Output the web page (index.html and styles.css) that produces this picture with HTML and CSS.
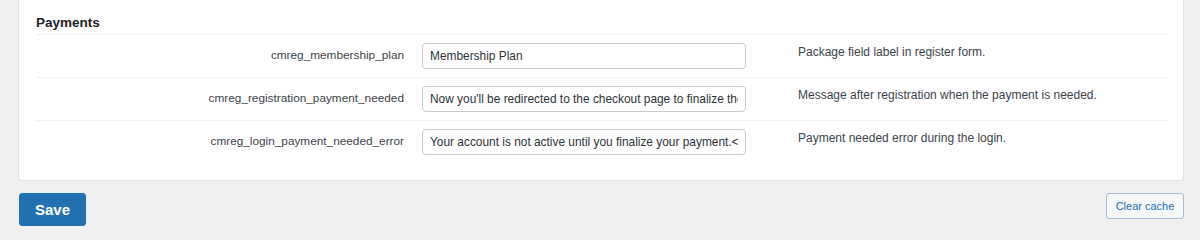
FILE: index.html
```html
<!DOCTYPE html>
<html lang="en">
<head>
<meta charset="utf-8">
<title>Payments settings</title>
<link rel="stylesheet" href="styles.css">
</head>
<body>
<div class="wrap">
  <div class="card">
    <h2 class="section-title">Payments</h2>
    <div class="rows">
      <div class="row">
        <label class="label" for="f1">cmreg_membership_plan</label>
        <div class="field"><input id="f1" class="text" type="text" value="Membership Plan"></div>
        <div class="desc">Package field label in register form.</div>
      </div>
      <div class="row">
        <label class="label" for="f2">cmreg_registration_payment_needed</label>
        <div class="field"><input id="f2" class="text" type="text" value="Now you'll be redirected to the checkout page to finalize the registration."></div>
        <div class="desc">Message after registration when the payment is needed.</div>
      </div>
      <div class="row">
        <label class="label" for="f3">cmreg_login_payment_needed_error</label>
        <div class="field"><input id="f3" class="text" type="text" value="Your account is not active until you finalize your payment.<a href=&quot;%s&quot;>"></div>
        <div class="desc">Payment needed error during the login.</div>
      </div>
    </div>
  </div>
  <div class="actions">
    <button class="btn-primary" type="button">Save</button>
    <button class="btn-secondary" type="button">Clear cache</button>
  </div>
</div>
</body>
</html>
```
FILE: styles.css
```css
html, body {
  margin: 0;
  padding: 0;
}
body {
  background: #f0f0f1;
  font-family: "Liberation Sans", Arial, sans-serif;
  color: #3c434a;
}
.wrap {
  padding: 0 16px 0 18px;
}
.card {
  background: #fff;
  border: 1px solid #e2e2e4;
  border-top: 0;
  border-radius: 0 0 4px 4px;
  padding: 0 16px 17px 17px;
}
.section-title {
  margin: 0;
  padding-top: 13px;
  padding-bottom: 1px;
  line-height: 20px;
  font-size: 13.5px;
  font-weight: bold;
  color: #1d2327;
  border-bottom: 1px solid #f0f0f1;
}
.row {
  display: grid;
  grid-template-columns: 368px 342px 1fr;
  height: 42px;
  border-bottom: 1px solid #f0f0f1;
}
.row:last-child {
  border-bottom: 0;
}
.label {
  align-self: start;
  padding-top: 11px;
  text-align: right;
  font-size: 11.8px;
  line-height: 18px;
  color: #3c434a;
  white-space: nowrap;
}
.field {
  padding: 8px 0 0 18px;
}
.text {
  box-sizing: border-box;
  display: block;
  width: 324px;
  height: 26px;
  margin: 0;
  padding: 0 7px;
  border: 1px solid #c9cacd;
  border-radius: 4px;
  background: #fff;
  font-family: "Liberation Sans", Arial, sans-serif;
  font-size: 11.9px;
  color: #2c3338;
  outline: none;
}
.desc {
  padding: 8px 0 0 52px;
  font-size: 12px;
  line-height: 18px;
  color: #3c434a;
}
.actions {
  display: flex;
  justify-content: space-between;
  align-items: flex-start;
  padding: 12px 0 0 1px;
}
.btn-primary {
  width: 67px;
  height: 33px;
  border: 1px solid #2271b1;
  border-radius: 3px;
  background: #2271b1;
  color: #fff;
  font-family: "Liberation Sans", Arial, sans-serif;
  font-size: 15px;
  font-weight: bold;
  padding: 0;
}
.btn-secondary {
  width: 78px;
  height: 26px;
  border: 1px solid #a4bcd8;
  border-radius: 3px;
  background: #f6f7f7;
  color: #2271b1;
  font-family: "Liberation Sans", Arial, sans-serif;
  font-size: 11px;
  padding: 0;
}
```
